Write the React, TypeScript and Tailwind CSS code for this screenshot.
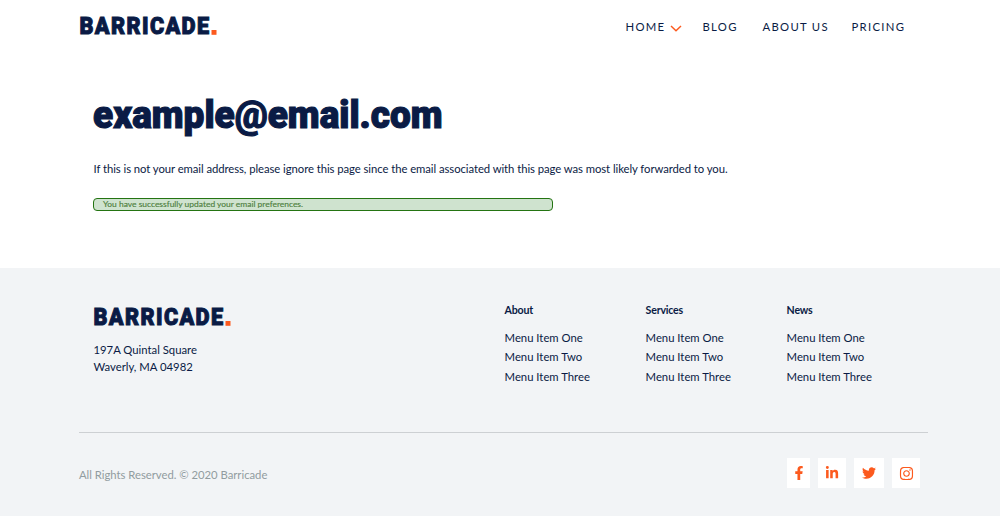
import React from "react";
import { FaFacebookF, FaInstagram, FaLinkedinIn, FaTwitter } from "react-icons/fa";

function Logo() {
  return (
    <svg width="138" height="20" viewBox="0 0 138 20" role="img" aria-label="Barricade" className="block overflow-visible">
      <text
        x="0.5"
        y="18.4"
        textLength="131"
        lengthAdjust="spacingAndGlyphs"
        fill="#0a1b45"
        stroke="#0a1b45"
        strokeWidth="1"
        className="font-['Roboto',sans-serif] text-[23.6px] font-black"
        letterSpacing="1.5"
      >
        BARRICADE
      </text>
      <rect x="132.5" y="14" width="5" height="4.8" fill="#fc5a1e" />
    </svg>
  );
}

const columns = ["About", "Services", "News"];
const items = ["Menu Item One", "Menu Item Two", "Menu Item Three"];

export default function App() {
  return (
    <div className="flex h-[516px] w-[1000px] flex-col overflow-hidden bg-white font-['Lato',sans-serif] text-[11.3px] text-[#0a1b45]">
      <header className="flex h-[54px] shrink-0 justify-between pl-[79px] pr-[94.5px] pt-4">
        <Logo />
        <nav className="flex h-[22px] items-center text-[11.3px] leading-[22px] tracking-[1.3px]">
          <a className="w-[77px] whitespace-nowrap">
            <span className="inline-flex items-center">
              HOME
              <svg width="12" height="7" viewBox="0 0 12 7" className="ml-[5px] mt-0.5" fill="none" stroke="#fc5a1e" strokeWidth="1.5">
                <path d="M1 1 6 5.7 11 1" />
              </svg>
            </span>
          </a>
          <a className="w-[60px] whitespace-nowrap">BLOG</a>
          <a className="w-[89px] whitespace-nowrap">ABOUT US</a>
          <a className="w-[54px] whitespace-nowrap">PRICING</a>
        </nav>
      </header>

      <main className="flex h-[214px] shrink-0 flex-col items-start pl-[93px] pt-[36px]">
        <h1 className="h-[50px] origin-left scale-x-[0.947] whitespace-nowrap font-['Roboto',sans-serif] text-[39px] font-black leading-[50px] [-webkit-text-stroke:1.2px_#0a1b45]">
          example@email.com
        </h1>
        <p className="mt-[21px] whitespace-nowrap pl-[0.5px] leading-4 tracking-[-0.062px]">
          If this is not your email address, please ignore this page since the email associated with this page was most likely
          forwarded to you.
        </p>
        <div className="mt-[21px] flex h-[13px] w-[460px] items-center rounded-[4px] border-[1.5px] border-[#247412] bg-[#cfe3cf] pl-[9px] text-[8.45px] leading-[11px] text-[#4e8040] [-webkit-text-stroke:0.15px_#4e8040]">
          You have successfully updated your email preferences.
        </div>
      </main>

      <footer className="h-[248px] shrink-0 bg-[#f2f4f6] pl-[79px] pr-[72px]">
        <div className="flex h-[165px] border-b-[1.5px] border-[#cdd0d3] pl-[14px]">
          <div className="w-[411.6px] pt-[39px]">
            <Logo />
            <address className="mt-[14px] pl-[0.5px] not-italic leading-[17px]">
              197A Quintal Square
              <br />
              Waverly, MA 04982
            </address>
          </div>
          {columns.map((title) => (
            <section key={title} className="w-[141px] pt-[34px]">
              <h2 className="text-[10.6px] font-bold leading-4 tracking-[-0.2px]">{title}</h2>
              <ul className="mt-[9.5px] leading-[19.8px]">
                {items.map((item) => (
                  <li key={item}>{item}</li>
                ))}
              </ul>
            </section>
          ))}
        </div>
        <div className="flex justify-between pr-2 pt-[25px]">
          <p className="pt-[9px] leading-4 tracking-[-0.02px] text-[#919ca0]">All Rights Reserved. © 2020 Barricade</p>
          <div className="flex gap-2 text-[14px] text-[#fc5a1e]">
            <a className="flex h-[30px] w-[23px] items-center justify-center bg-white"><FaFacebookF /></a>
            <a className="flex h-[30px] w-7 items-center justify-center bg-white"><FaLinkedinIn /></a>
            <a className="flex h-[30px] w-[30px] items-center justify-center bg-white"><FaTwitter /></a>
            <a className="flex h-[30px] w-7 items-center justify-center bg-white"><FaInstagram className="text-[15px]" /></a>
          </div>
        </div>
      </footer>
    </div>
  );
}
